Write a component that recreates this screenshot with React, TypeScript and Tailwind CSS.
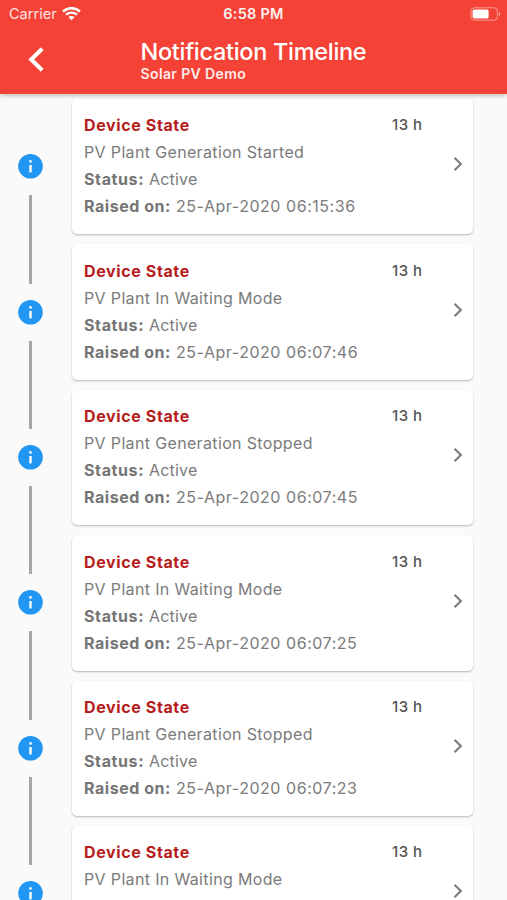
const notifications = [
  { message: "PV Plant Generation Started", raised: "25-Apr-2020 06:15:36" },
  { message: "PV Plant In Waiting Mode", raised: "25-Apr-2020 06:07:46" },
  { message: "PV Plant Generation Stopped", raised: "25-Apr-2020 06:07:45" },
  { message: "PV Plant In Waiting Mode", raised: "25-Apr-2020 06:07:25" },
  { message: "PV Plant Generation Stopped", raised: "25-Apr-2020 06:07:23" },
  { message: "PV Plant In Waiting Mode", raised: null },
];

function WifiIcon() {
  return (
    <svg width="19" height="14" viewBox="0 0 19 14" fill="none" stroke="white">
      <path d="M1 4.5C5.8 0 13.2 0 18 4.5" strokeWidth="2.5" />
      <path d="M4 7.7C7.2 4.8 11.8 4.8 15 7.7" strokeWidth="2.3" />
      <path d="M9.5 13.2 6.4 10.1C8.2 8.5 10.8 8.5 12.6 10.1Z" fill="white" stroke="none" />
    </svg>
  );
}

function BatteryIcon() {
  return (
    <svg width="31" height="14" viewBox="0 0 31 14" fill="none">
      <rect x="1" y="0.8" width="26.4" height="12.4" rx="3.4" stroke="white" strokeOpacity="0.45" />
      <rect x="2.6" y="2.4" width="16" height="9.2" rx="1.8" fill="white" />
      <path d="M28.8 4.8C30.6 5.5 30.6 8.5 28.8 9.2Z" fill="white" fillOpacity="0.55" />
    </svg>
  );
}

function Header() {
  return (
    <header className="relative z-10 h-[94px] shrink-0 bg-[#f44336] text-white shadow-[0_1px_5px_rgba(0,0,0,0.3)]">
      <div className="grid h-[27px] grid-cols-3 items-center pr-[6px] pl-[9px]">
        <div className="flex items-center gap-[5px] text-[14.5px] tracking-[0.02px] text-white/85">
          Carrier
          <WifiIcon />
        </div>
        <div className="pr-[3px] text-center text-[14.5px] font-semibold tracking-[0.25px] text-white/95">
          6:58 PM
        </div>
        <div className="flex justify-end">
          <BatteryIcon />
        </div>
      </div>
      <div className="flex pl-[27.5px]">
        <svg className="mt-[20px]" width="17" height="25" viewBox="0 0 17 25" fill="none">
          <path d="M14.2 1.7 3.2 12.5 14.2 23.3" stroke="white" strokeWidth="4" />
        </svg>
        <div className="ml-[96px] pt-[11px]">
          <h1 className="text-[23.5px] leading-[27px] font-medium tracking-[-0.3px] whitespace-nowrap">
            Notification Timeline
          </h1>
          <p className="text-[14px] leading-[18px] font-semibold tracking-[0.38px] text-white/90">
            Solar PV Demo
          </p>
        </div>
      </div>
    </header>
  );
}

function TimelineRail() {
  return (
    <div className="flex w-[72px] shrink-0 flex-col items-center gap-4 pt-[60.2px] pr-[11.5px]">
      {notifications.map((_, i) => (
        <div key={i} className="flex flex-col items-center gap-4">
          <svg width="25" height="25" viewBox="0 0 25 25">
            <circle cx="12.5" cy="12.3" r="12.3" fill="#2196f3" />
            <rect x="11.3" y="6.2" width="2.4" height="2.4" fill="white" />
            <rect x="11.3" y="11" width="2.4" height="7.4" fill="white" />
          </svg>
          <div className="h-[88.4px] w-[3px] bg-[#a6a6a6]" />
        </div>
      ))}
    </div>
  );
}

function NotificationCard({ n }: { n: (typeof notifications)[number] }) {
  return (
    <div className="flex h-[135.4px] w-[401px] shrink-0 items-start rounded-[5px] bg-white pt-[13.35px] pl-3 text-[16px] leading-[27px] tracking-[0.35px] text-[#7b7b7b] shadow-[0_1px_2px_rgba(0,0,0,0.28)]">
      <div className="w-[308px] whitespace-nowrap">
        <h2 className="font-bold tracking-[0.62px] text-[#b71c1c]">Device State</h2>
        <p>{n.message}</p>
        {n.raised && (
          <>
            <p>
              <span className="font-bold tracking-[0.62px] text-[#757575]">Status:</span>{" "}
              <span className="tracking-[0.2px]">Active</span>
            </p>
            <p className="tracking-[0.54px]">
              <span className="font-bold text-[#757575]">Raised on:</span> {n.raised}
            </p>
          </>
        )}
      </div>
      <span className="w-[60px] text-[15px] leading-[26px] font-medium tracking-[0.45px] text-[#555555]">
        13 h
      </span>
      <svg className="mt-[44px]" width="12" height="16" viewBox="0 0 12 16" fill="none">
        <path d="M2.5 1.8 8.8 8 2.5 14.2" stroke="#808080" strokeWidth="2.3" />
      </svg>
    </div>
  );
}

export default function App() {
  return (
    <div className="flex h-[900px] w-[507px] flex-col overflow-hidden bg-[#fafafa] font-['Inter','Liberation_Sans',sans-serif]">
      <Header />
      <main className="flex min-h-0 flex-1 overflow-hidden">
        <TimelineRail />
        <div className="flex flex-col gap-[10px] pt-[5px]">
          {notifications.map((n, i) => (
            <NotificationCard key={i} n={n} />
          ))}
        </div>
      </main>
    </div>
  );
}
